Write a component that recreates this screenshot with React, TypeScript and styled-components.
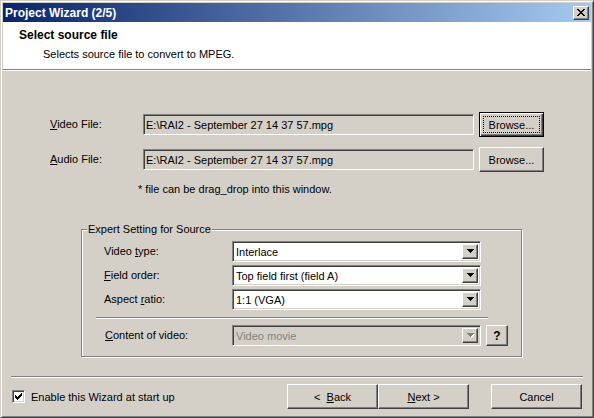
import styled, { createGlobalStyle } from "styled-components";

const GlobalStyle = createGlobalStyle`
  html, body {
    margin: 0;
    padding: 0;
    background: #d4d0c8;
  }
  body {
    font-family: "Liberation Sans", Arial, sans-serif;
    font-size: 11px;
    color: #000;
  }
`;

const CloseGlyph = () => (
  <svg width="8" height="7" viewBox="0 0 8 7" shapeRendering="crispEdges">
    <path
      fill="#000"
      d="M0 0h2v1H0zM6 0h2v1H6zM1 1h2v1H1zM5 1h2v1H5zM2 2h4v1H2zM3 3h2v1H3zM2 4h4v1H2zM1 5h2v1H1zM5 5h2v1H5zM0 6h2v1H0zM6 6h2v1H6z"
    />
  </svg>
);

const CheckGlyph = () => (
  <svg width="7" height="7" viewBox="0 0 7 7" shapeRendering="crispEdges">
    <path
      fill="#000"
      d="M0 2h1v3H0zM1 3h1v3H1zM2 4h1v3H2zM3 3h1v3H3zM4 2h1v3H4zM5 1h1v3H5zM6 0h1v3H6z"
    />
  </svg>
);

const Arrow = ({ disabled }: { disabled?: boolean }) => (
  <svg width="8" height="5" viewBox="0 0 8 5" shapeRendering="crispEdges">
    {disabled && <path fill="#fff" d="M1 1h7v1H1zM2 2h5v1H2zM3 3h3v1H3zM4 4h1v1H4z" />}
    <path
      fill={disabled ? "#808080" : "#000"}
      d="M0 0h7v1H0zM1 1h5v1H1zM2 2h3v1H2zM3 3h1v1H3z"
    />
  </svg>
);

const App = () => {
  return (
    <>
      <GlobalStyle />
      <Window>
        <TitleBar>
          <TitleText>Project Wizard (2/5)</TitleText>
          <CloseButton>
            <CloseGlyph />
          </CloseButton>
        </TitleBar>
        <Header>
          <Heading>Select source file</Heading>
          <SubHeading>Selects source file to convert to MPEG.</SubHeading>
        </Header>
        <Separator />
        <Body>
          <FileGrid>
            <Label>
              <U>V</U>ideo File:
            </Label>
            <TextField>E:\RAI2 - September 27 14 37 57.mpg</TextField>
            <Button $default>
              <FocusRect>Browse...</FocusRect>
            </Button>
            <Label>
              <U>A</U>udio File:
            </Label>
            <TextField>E:\RAI2 - September 27 14 37 57.mpg</TextField>
            <Button>Browse...</Button>
          </FileGrid>
          <Hint>* file can be drag_drop into this window.</Hint>

          <GroupBox>
            <Legend>Expert Setting for Source</Legend>
            <SettingsGrid>
              <Label>
                Video <U>t</U>ype:
              </Label>
              <Combo>
                <ComboText>Interlace</ComboText>
                <DropButton>
                  <Arrow />
                </DropButton>
              </Combo>
              <Label>
                <U>F</U>ield order:
              </Label>
              <Combo>
                <ComboText>Top field first (field A)</ComboText>
                <DropButton>
                  <Arrow />
                </DropButton>
              </Combo>
              <Label>
                Aspect <U>r</U>atio:
              </Label>
              <Combo>
                <ComboText>1:1 (VGA)</ComboText>
                <DropButton>
                  <Arrow />
                </DropButton>
              </Combo>
            </SettingsGrid>
            <GroupSeparator />
            <ContentRow>
              <Label $indent={1}>
                <U>C</U>ontent of video:
              </Label>
              <Combo $disabled>
                <ComboText>Video movie</ComboText>
                <DropButton>
                  <Arrow disabled />
                </DropButton>
              </Combo>
              <HelpButton>?</HelpButton>
            </ContentRow>
          </GroupBox>

          <Footer>
            <FooterSeparator />
            <FooterRow>
              <CheckBox>
                <CheckGlyph />
              </CheckBox>
              <CheckLabel>Enable this Wizard at start up</CheckLabel>
              <Spacer />
              <NavButton>
                {"<\u00a0\u00a0"}
                <U>B</U>ack
              </NavButton>
              <NavButton>
                <U>N</U>ext {">"}
              </NavButton>
              <NavButton $gap>Cancel</NavButton>
            </FooterRow>
          </Footer>
        </Body>
      </Window>
    </>
  );
};

export default App;

const Window = styled.div`
  width: 594px;
  height: 418px;
  box-sizing: border-box;
  border: 1px solid;
  border-color: #d4d0c8 #404040 #404040 #d4d0c8;
  box-shadow: inset 1px 1px 0 #fff, inset -1px -1px 0 #808080;
  padding: 2px;
  display: flex;
  flex-direction: column;
  background: #d4d0c8;
`;

const TitleBar = styled.div`
  height: 19px;
  flex-shrink: 0;
  display: flex;
  align-items: center;
  justify-content: space-between;
  padding: 0 2px 0 2px;
  background: linear-gradient(to right, #0a246a, #a6caf0);
`;

const TitleText = styled.span`
  color: #fff;
  font-weight: bold;
  font-size: 12px;
  white-space: nowrap;
`;

const raised = `
  background: #d4d0c8;
  border: 1px solid;
  border-color: #fff #404040 #404040 #fff;
  box-shadow: inset -1px -1px 0 #808080, inset 1px 1px 0 #d4d0c8;
`;

const sunken = `
  border: 1px solid;
  border-color: #808080 #fff #fff #808080;
  box-shadow: inset 1px 1px 0 #404040, inset -1px -1px 0 #d4d0c8;
`;

const CloseButton = styled.div`
  ${raised}
  box-sizing: border-box;
  width: 16px;
  height: 14px;
  display: flex;
  align-items: center;
  justify-content: center;
`;

const Header = styled.div`
  height: 47px;
  flex-shrink: 0;
  box-sizing: border-box;
  background: #fff;
  padding: 6px 0 0 16px;
`;

const Heading = styled.div`
  font-weight: bold;
  font-size: 12px;
  line-height: 14px;
`;

const SubHeading = styled.div`
  margin: 6px 0 0 24px;
  line-height: 13px;
`;

const Separator = styled.div`
  flex-shrink: 0;
  border-top: 1px solid #808080;
  border-bottom: 1px solid #fff;
`;

const Body = styled.div`
  flex: 1;
  display: flex;
  flex-direction: column;
`;

const FileGrid = styled.div`
  display: grid;
  grid-template-columns: 88px 331px 65px;
  grid-auto-rows: 25px;
  column-gap: 5px;
  row-gap: 10px;
  align-items: center;
  margin: 41px 0 0 47px;
`;

const Label = styled.div<{ $indent?: number }>`
  white-space: nowrap;
  line-height: 13px;
  padding-left: ${({ $indent }) => $indent ?? 0}px;
`;

const U = styled.span`
  text-decoration: underline;
`;

const TextField = styled.div`
  ${sunken}
  box-sizing: border-box;
  height: 21px;
  padding: 0 2px;
  background: #d4d0c8;
  display: flex;
  align-items: center;
  white-space: nowrap;
  overflow: hidden;
`;

const Button = styled.div<{ $default?: boolean }>`
  box-sizing: border-box;
  height: 25px;
  display: flex;
  align-items: center;
  justify-content: center;
  ${({ $default }) =>
    $default
      ? `
    background: #d4d0c8;
    border: 1px solid #000;
    box-shadow: inset 1px 1px 0 #fff, inset -1px -1px 0 #404040, inset -2px -2px 0 #808080;
    padding: 3px;
  `
      : raised}
`;

const FocusRect = styled.span`
  flex: 1;
  align-self: stretch;
  display: flex;
  align-items: center;
  justify-content: center;
  border: 1px dotted #000;
`;

const Hint = styled.div`
  margin: 11px 0 0 135px;
  line-height: 13px;
`;

const GroupBox = styled.fieldset`
  margin: 27px 0 0 78px;
  padding: 0;
  width: 441px;
  box-sizing: border-box;
  border: 1px solid #808080;
  box-shadow: inset 1px 1px 0 #fff, 1px 1px 0 #fff;
  min-inline-size: 0;
`;

const Legend = styled.legend`
  margin-left: 5px;
  padding: 0 1px;
  line-height: 13px;
  background: #d4d0c8;
`;

const SettingsGrid = styled.div`
  display: grid;
  grid-template-columns: 128px 249px;
  grid-auto-rows: 21px;
  row-gap: 3px;
  align-items: center;
  margin: 5px 0 0 22px;
`;

const Combo = styled.div<{ $disabled?: boolean }>`
  ${sunken}
  box-sizing: border-box;
  height: 21px;
  display: flex;
  align-items: stretch;
  padding: 2px;
  background: ${({ $disabled }) => ($disabled ? "#d4d0c8" : "#fff")};
  color: ${({ $disabled }) => ($disabled ? "#808080" : "#000")};
`;

const ComboText = styled.span`
  flex: 1;
  display: flex;
  align-items: center;
  padding-left: 1px;
  white-space: nowrap;
  overflow: hidden;
`;

const DropButton = styled.span`
  ${raised}
  box-sizing: border-box;
  width: 16px;
  display: flex;
  align-items: center;
  justify-content: center;
  padding-left: 1px;
`;

const GroupSeparator = styled.div`
  width: 392px;
  margin: 7px 0 0 14px;
  border-top: 1px solid #808080;
  border-bottom: 1px solid #fff;
`;

const ContentRow = styled.div`
  display: grid;
  grid-template-columns: 128px 249px 27px;
  grid-auto-rows: 21px;
  align-items: center;
  margin: 6px 0 10px 22px;
`;

const HelpButton = styled.div`
  ${raised}
  box-sizing: border-box;
  height: 21px;
  margin-left: 5px;
  width: 22px;
  display: flex;
  align-items: center;
  justify-content: center;
  font-weight: bold;
  font-size: 12px;
`;

const Footer = styled.div`
  margin-top: auto;
`;

const FooterSeparator = styled.div`
  margin: 0 8px;
  border-top: 1px solid #808080;
  border-bottom: 1px solid #fff;
`;

const FooterRow = styled.div`
  display: flex;
  align-items: center;
  height: 25px;
  margin: 6px 9px 6px 9px;
`;

const CheckBox = styled.div`
  ${sunken}
  box-sizing: border-box;
  width: 13px;
  height: 13px;
  background: #fff;
  display: flex;
  align-items: center;
  justify-content: center;
`;

const CheckLabel = styled.span`
  margin-left: 6px;
  white-space: nowrap;
`;

const Spacer = styled.div`
  flex: 1;
`;

const NavButton = styled.div<{ $gap?: boolean }>`
  ${raised}
  box-sizing: border-box;
  width: 91px;
  height: 25px;
  display: flex;
  align-items: center;
  justify-content: center;
  white-space: pre;
  margin-left: ${({ $gap }) => ($gap ? "22px" : "0")};
`;
